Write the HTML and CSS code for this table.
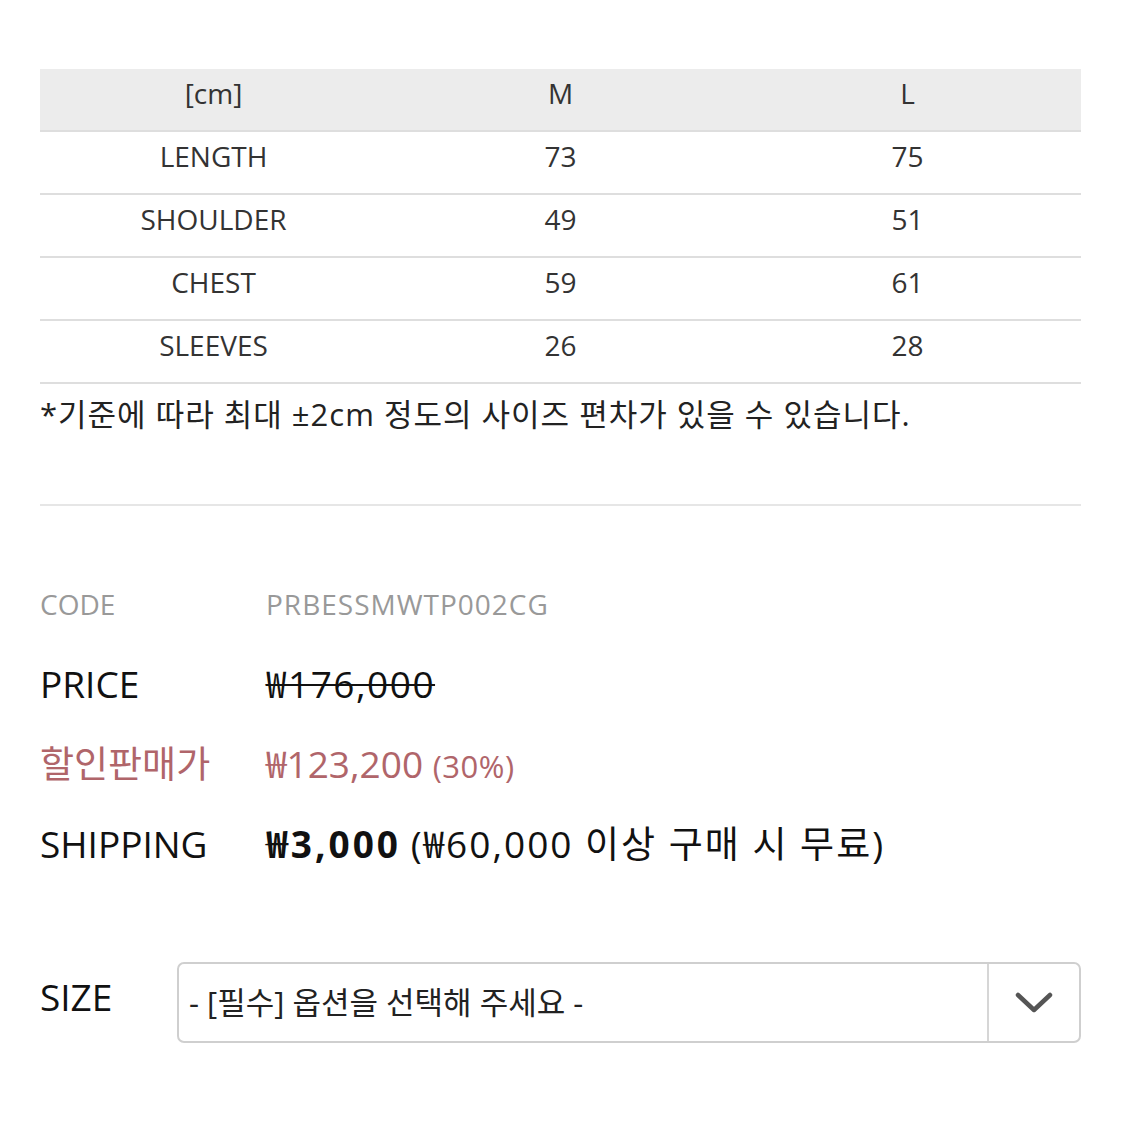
FILE: index.html
```html
<!DOCTYPE html>
<html lang="ko">
<head>
<meta charset="utf-8">
<link rel="stylesheet" href="styles.css">
</head>
<body>
<div class="page">
  <div class="size-table">
    <div class="row head">
      <div class="cell">[cm]</div><div class="cell">M</div><div class="cell">L</div>
    </div>
    <div class="row">
      <div class="cell">LENGTH</div><div class="cell">73</div><div class="cell">75</div>
    </div>
    <div class="row">
      <div class="cell">SHOULDER</div><div class="cell">49</div><div class="cell">51</div>
    </div>
    <div class="row">
      <div class="cell">CHEST</div><div class="cell">59</div><div class="cell">61</div>
    </div>
    <div class="row">
      <div class="cell">SLEEVES</div><div class="cell">26</div><div class="cell">28</div>
    </div>
  </div>
  <p class="note">*기준에 따라 최대 ±2cm 정도의 사이즈 편차가 있을 수 있습니다.</p>
  <div class="divider"></div>

  <div class="info">
    <div class="info-row code">
      <div class="label">CODE</div><div class="value">PRBESSMWTP002CG</div>
    </div>
    <div class="info-row">
      <div class="label">PRICE</div><div class="value"><s class="old">₩176,000</s></div>
    </div>
    <div class="info-row sale">
      <div class="label">할인판매가</div><div class="value">₩123,200 <span class="pct">(30%)</span></div>
    </div>
    <div class="info-row">
      <div class="label">SHIPPING</div><div class="value"><b class="fee">₩3,000</b> <span class="free">(₩60,000 이상 구매 시 무료)</span></div>
    </div>
  </div>

  <div class="option">
    <div class="option-label">SIZE</div>
    <div class="select">
      <div class="select-text">- [필수] 옵션을 선택해 주세요 -</div>
      <div class="select-btn">
        <svg width="38" height="24" viewBox="0 0 38 24"><path d="M3 4 L19 19 L35 4" fill="none" stroke="#555" stroke-width="4.5" stroke-linecap="round" stroke-linejoin="round"/></svg>
      </div>
    </div>
  </div>
</div>
</body>
</html>
```

FILE: styles.css
```css
html, body {
  margin: 0;
  padding: 0;
  background: #fff;
}
body {
  font-family: "Open Sans", "Noto Sans CJK KR", sans-serif;
  color: #222;
}
.page {
  padding: 69px 44px 0 40px;
}
.size-table {
  display: flex;
  flex-direction: column;
}
.row {
  display: grid;
  grid-template-columns: repeat(3, 1fr);
  height: 61px;
  border-bottom: 2px solid #dedede;
  align-items: center;
}
.row.head {
  background: #ececec;
}
.cell {
  text-align: center;
  font-size: 28px;
  color: #333;
  line-height: 1;
  padding-bottom: 13px;
}
.note {
  margin: 10px 0 0;
  font-size: 31px;
  line-height: 40px;
  color: #222;
  letter-spacing: 1px;
}
.divider {
  margin-top: 70px;
  height: 2px;
  background: #e6e6e6;
}
.info {
  margin-top: 57px;
  display: flex;
  flex-direction: column;
}
.info-row {
  display: flex;
  align-items: center;
  height: 80px;
  font-size: 37px;
  line-height: 1;
  color: #111;
  padding-top: 1px;
  box-sizing: border-box;
}
.info-row .label {
  width: 226px;
  flex: none;
}
.info-row.code {
  font-size: 28px;
  color: #999;
}
.info-row.code .value {
  letter-spacing: 1px;
}
.info-row.sale {
  color: #b0656a;
}
.info-row .pct {
  font-size: 31px;
  letter-spacing: 0.5px;
}
.old {
  text-decoration-thickness: 2px;
  letter-spacing: 1.5px;
}
.fee {
  font-weight: 700;
  letter-spacing: 3px;
}
.free {
  letter-spacing: 2px;
}
.option {
  margin-top: 79px;
  display: flex;
  align-items: center;
}
.option-label {
  width: 137px;
  flex: none;
  font-size: 37px;
  line-height: 1;
  color: #111;
  padding-bottom: 12px;
}
.select {
  flex: 1;
  height: 77px;
  border: 2px solid #cfcfcf;
  border-radius: 7px;
  display: flex;
  align-items: center;
}
.select-text {
  flex: 1;
  padding-left: 10px;
  padding-bottom: 0;
  font-size: 31px;
  line-height: 1;
  color: #222;
}
.select-btn {
  width: 90px;
  height: 100%;
  border-left: 2px solid #d6d6d6;
  display: flex;
  align-items: center;
  justify-content: center;
}
```
